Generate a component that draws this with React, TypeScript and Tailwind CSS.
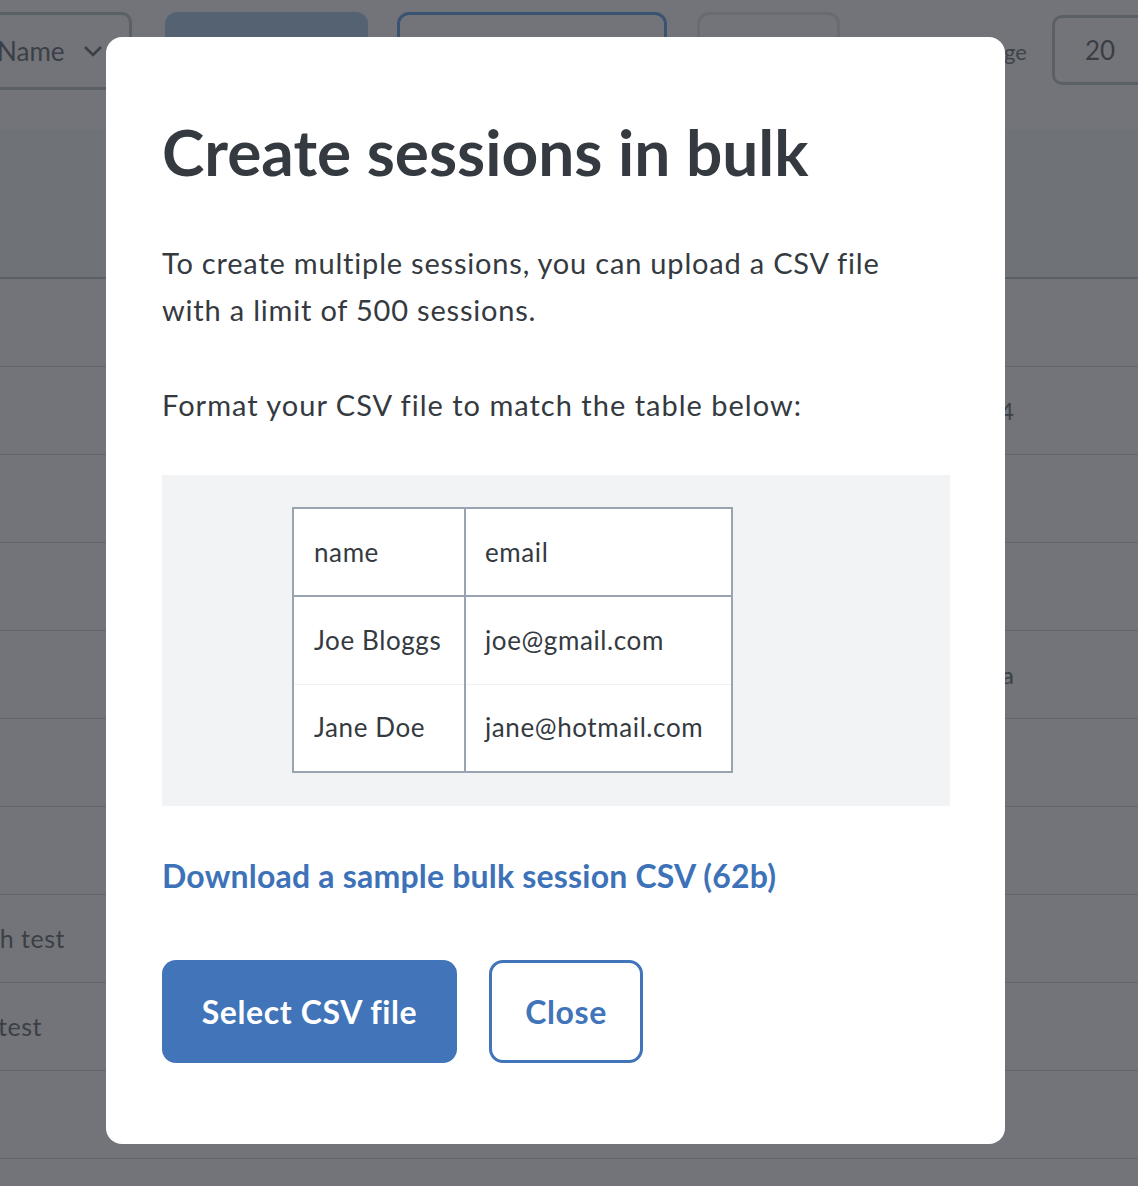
import React from 'react';

const rows = [
  { left: '', leftEnd: 65, right: '' },
  { left: '', leftEnd: 65, right: '12 Mar 2024' },
  { left: '', leftEnd: 65, right: '' },
  { left: '', leftEnd: 65, right: '' },
  { left: '', leftEnd: 65, right: 'Ana Silva' },
  { left: '', leftEnd: 65, right: '' },
  { left: '', leftEnd: 65, right: '' },
  { left: 'Math test', leftEnd: 65, right: '' },
  { left: 'Upload test', leftEnd: 42, right: '' },
  { left: '', leftEnd: 65, right: '' },
];

const sample = [
  ['name', 'email'],
  ['Joe Bloggs', 'joe@gmail.com'],
  ['Jane Doe', 'jane@hotmail.com'],
];

const BackgroundPage = () => (
  <div className="w-[1138px] h-[1186px] bg-[#727479] overflow-hidden text-[#3b4046] [font-family:Lato,'Noto_Sans',sans-serif]">
    {/* Toolbar */}
    <div className="h-[130px] flex items-start pt-[12px]">
      <div className="-ml-[40px] w-[172px] h-[78px] border-[3px] border-[#5b6067] rounded-[10px] flex items-center pl-[34px] gap-[18px] text-[26px]">
        <span>Name</span>
        <svg width="20" height="12" viewBox="0 0 20 12" fill="none" stroke="#3b4046" strokeWidth="2.5">
          <path d="M2 2l8 8 8-8" />
        </svg>
      </div>
      <div className="ml-[33px] w-[203px] h-[78px] rounded-[12px] bg-[#556272]" />
      <div className="ml-[29px] w-[270px] h-[78px] rounded-[12px] border-[3px] border-[#3b5372]" />
      <div className="ml-[30px] w-[143px] h-[78px] rounded-[12px] border-[3px] border-[#686b70]" />
      <div className="flex-1 flex justify-end items-center h-[78px] pr-[25px] text-[22px] text-[#3f444a] whitespace-nowrap">
        Per page
      </div>
      <div className="mt-[3px] w-[100px] h-[70px] -mr-[14px] border-[3px] border-[#5b6067] rounded-[10px] flex items-center pl-[30px] text-[26px] text-[#3a3e44]">
        20
      </div>
    </div>

    {/* Table */}
    <div className="h-[149px] bg-[#6f7277] border-b-2 border-[#5a6068]" />
    {rows.map((r, i) => (
      <div key={i} className="relative h-[88px] border-b border-[#62676d] flex items-center">
        <div className="flex justify-end whitespace-nowrap text-[25px] tracking-[0.5px]" style={{ width: r.leftEnd }}>
          {r.left}
        </div>
        <div className="absolute left-0 w-[1014px] flex justify-end whitespace-nowrap text-[24px]">{r.right}</div>
      </div>
    ))}
  </div>
);

export default function App() {
  return (
    <div className="relative w-[1138px] h-[1186px] overflow-hidden">
      <BackgroundPage />

      {/* Modal */}
      <div className="absolute left-[106px] top-[37px] w-[899px] h-[1107px] bg-white rounded-[16px] px-[56px] pt-[83px] text-[#343a40] [font-family:Lato,'Noto_Sans',sans-serif]">
        <h1 className="text-[64px] leading-none font-bold">Create sessions in bulk</h1>

        <p className="mt-[55px] text-[29px] leading-[47px] tracking-[0.8px] w-[750px]">
          To create multiple sessions, you can upload a CSV file with a limit of 500 sessions.
        </p>
        <p className="mt-[48px] text-[29px] leading-[47px] tracking-[1px]">Format your CSV file to match the table below:</p>

        <div className="mt-[47px] w-[788px] h-[331px] bg-[#f2f3f5] pl-[130px] pt-[32px]">
          <table className="border-2 border-[#9aa3b2] bg-white border-collapse text-[26px] tracking-[0.6px]">
            <tbody>
              {sample.map((row, i) => (
                <tr
                  key={i}
                  className={i === 0 ? 'border-b-2 border-[#9aa3b2]' : i === 1 ? 'border-b border-[#eef0f2]' : ''}
                >
                  <td className="w-[172px] h-[88px] pl-[20px] border-r-2 border-[#9aa3b2]">{row[0]}</td>
                  <td className="w-[267px] h-[88px] pl-[19px]">{row[1]}</td>
                </tr>
              ))}
            </tbody>
          </table>
        </div>

        <a href="#" className="block mt-[50px] text-[32px] leading-[40px] font-bold tracking-[0.2px] text-[#3d72b8]">
          Download a sample bulk session CSV (62b)
        </a>

        <div className="mt-[64px] flex gap-[32px]">
          <button className="w-[295px] h-[103px] rounded-[14px] bg-[#4174b8] text-white text-[32px] font-bold tracking-[0.6px]">
            Select CSV file
          </button>
          <button className="w-[154px] h-[103px] rounded-[14px] border-[3px] border-[#4174b8] text-[#4174b8] text-[32px] font-bold tracking-[0.6px]">
            Close
          </button>
        </div>
      </div>
    </div>
  );
}
